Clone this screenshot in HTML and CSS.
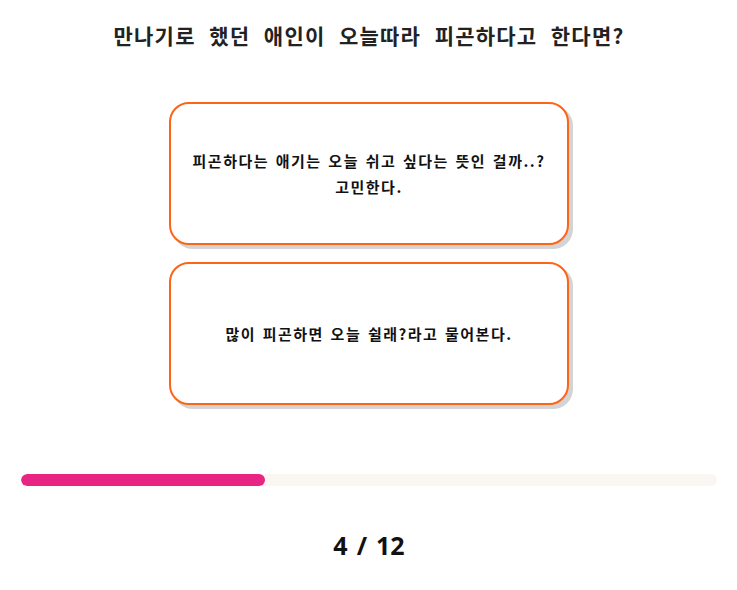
FILE: index.html
```html
<!DOCTYPE html>
<html lang="ko">
<head>
<meta charset="utf-8">
<link rel="stylesheet" href="styles.css">
</head>
<body>
<main class="quiz">
  <h1 class="question">만나기로 했던 애인이 오늘따라 피곤하다고 한다면?</h1>
  <div class="answers">
    <button class="answer">피곤하다는 애기는 오늘 쉬고 싶다는 뜻인 걸까..?<br>고민한다.</button>
    <button class="answer">많이 피곤하면 오늘 쉴래?라고 물어본다.</button>
  </div>
  <div class="progress"><div class="progress-fill" style="width:35%"></div></div>
  <div class="count">4 / 12</div>
</main>
</body>
</html>
```
FILE: styles.css
```css
* { box-sizing: border-box; }
html, body { margin: 0; padding: 0; background: #fff; }
body {
  font-family: "Noto Sans CJK KR", "Noto Sans", sans-serif;
  color: #111;
}
.quiz {
  display: flex;
  flex-direction: column;
  align-items: center;
  padding: 19px 20px 0 21px;
}
.question {
  margin: 0;
  font-size: 21px;
  font-weight: 700;
  line-height: 32px;
  letter-spacing: 1.2px;
  word-spacing: 6.5px;
  color: #222;
}
.answers {
  display: flex;
  flex-direction: column;
  gap: 17px;
  margin-top: 51px;
}
.answer {
  width: 400px;
  height: 143px;
  display: flex;
  align-items: center;
  justify-content: center;
  text-align: center;
  background: #fff;
  border: 2px solid #ff6315;
  border-radius: 20px;
  box-shadow: 4px 4px 0 #d4d4d4;
  font-family: inherit;
  font-size: 15px;
  font-weight: 700;
  line-height: 26px;
  letter-spacing: 1.5px;
  word-spacing: 1px;
  color: #111;
  padding: 0 10px;
}
.progress {
  align-self: stretch;
  margin-top: 69px;
  height: 12px;
  border-radius: 6px;
  background: #faf6f2;
  overflow: hidden;
}
.progress-fill {
  height: 100%;
  background: #e82582;
  border-radius: 6px;
}
.count {
  margin-top: 42px;
  font-family: "Noto Sans", sans-serif;
  font-size: 25px;
  font-weight: 700;
  word-spacing: 2.5px;
  color: #111;
}
```
